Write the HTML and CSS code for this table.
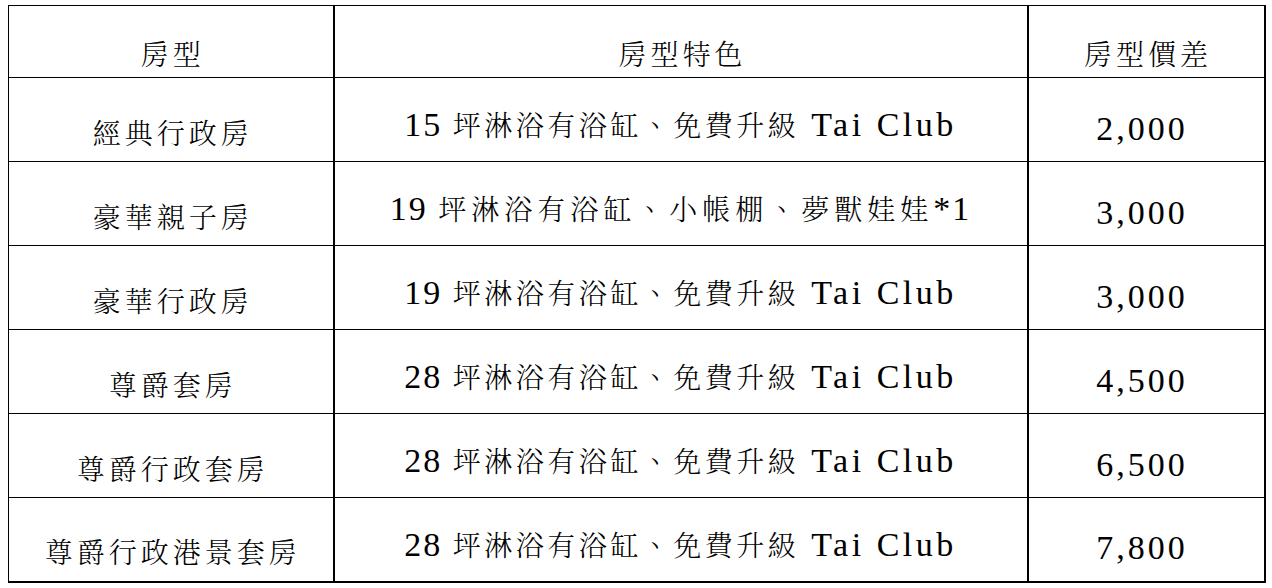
FILE: index.html
```html
<!DOCTYPE html>
<html lang="zh-Hant">
<head>
<meta charset="utf-8">
<title>房型價差</title>
<link rel="stylesheet" href="styles.css">
</head>
<body>
<table class="rooms">
  <colgroup>
    <col class="c-name">
    <col class="c-feat">
    <col class="c-price">
  </colgroup>
  <thead>
    <tr class="head-row">
      <th class="name-h">房型</th>
      <th class="feat-h">房型特色</th>
      <th class="price-h">房型價差</th>
    </tr>
  </thead>
  <tbody>
    <tr class="row">
      <td class="name">經典行政房</td>
      <td class="feat"><span class="lat">15 </span>坪淋浴有浴缸、免費升級<span class="lat club"> Tai Club</span></td>
      <td class="price">2,000</td>
    </tr>
    <tr class="row">
      <td class="name">豪華親子房</td>
      <td class="feat feat-wide"><span class="lat">19 </span>坪淋浴有浴缸、小帳棚、夢獸娃娃<span class="lat">*1</span></td>
      <td class="price">3,000</td>
    </tr>
    <tr class="row">
      <td class="name">豪華行政房</td>
      <td class="feat"><span class="lat">19 </span>坪淋浴有浴缸、免費升級<span class="lat club"> Tai Club</span></td>
      <td class="price">3,000</td>
    </tr>
    <tr class="row">
      <td class="name">尊爵套房</td>
      <td class="feat"><span class="lat">28 </span>坪淋浴有浴缸、免費升級<span class="lat club"> Tai Club</span></td>
      <td class="price">4,500</td>
    </tr>
    <tr class="row">
      <td class="name">尊爵行政套房</td>
      <td class="feat"><span class="lat">28 </span>坪淋浴有浴缸、免費升級<span class="lat club"> Tai Club</span></td>
      <td class="price">6,500</td>
    </tr>
    <tr class="row">
      <td class="name">尊爵行政港景套房</td>
      <td class="feat"><span class="lat">28 </span>坪淋浴有浴缸、免費升級<span class="lat club"> Tai Club</span></td>
      <td class="price">7,800</td>
    </tr>
  </tbody>
</table>
</body>
</html>
```
FILE: styles.css
```css
html, body {
  background: #ffffff;
}
body {
  margin: 5px 0 0 8px;
  color: #000000;
  font-family: "Noto Serif CJK TC", "Noto Sans CJK TC", serif;
}
.rooms {
  border-collapse: collapse;
  table-layout: fixed;
  width: 1256px;
  border-top: 1px solid #000;
  border-left: 1px solid #000;
  border-right: 2px solid #000;
  border-bottom: 2px solid #000;
}
.c-name { width: 325px; }
.c-feat { width: 694px; }
.c-price { width: 237px; }

.head-row { height: 72px; }
.row { height: 84px; }

.rooms th,
.rooms td {
  font-size: 28px;
  line-height: 28px;
  font-weight: 300;
  text-align: center;
  vertical-align: middle;
  padding: 0;
  border-right: 2px solid #000;
  border-bottom: 1px solid #000;
  white-space: nowrap;
}
.rooms thead th {
  padding-top: 22px;
  letter-spacing: 4px;
  text-indent: 4px;
}
.rooms .name {
  letter-spacing: 4px;
  text-indent: 4px;
  padding-top: 24px;
}
.rooms .feat {
  letter-spacing: 3.5px;
  padding-top: 10px;
}
.rooms .feat-wide {
  letter-spacing: 5px;
}
.rooms .price {
  font-family: "Liberation Serif", serif;
  font-size: 34px;
  font-weight: 400;
  letter-spacing: 3px;
  padding-top: 18px;
  padding-right: 8px;
}
.lat {
  font-family: "Liberation Serif", serif;
  font-size: 34px;
  line-height: 28px;
  font-weight: 400;
  letter-spacing: 2px;
}
.club {
  letter-spacing: 3.5px;
}
```
